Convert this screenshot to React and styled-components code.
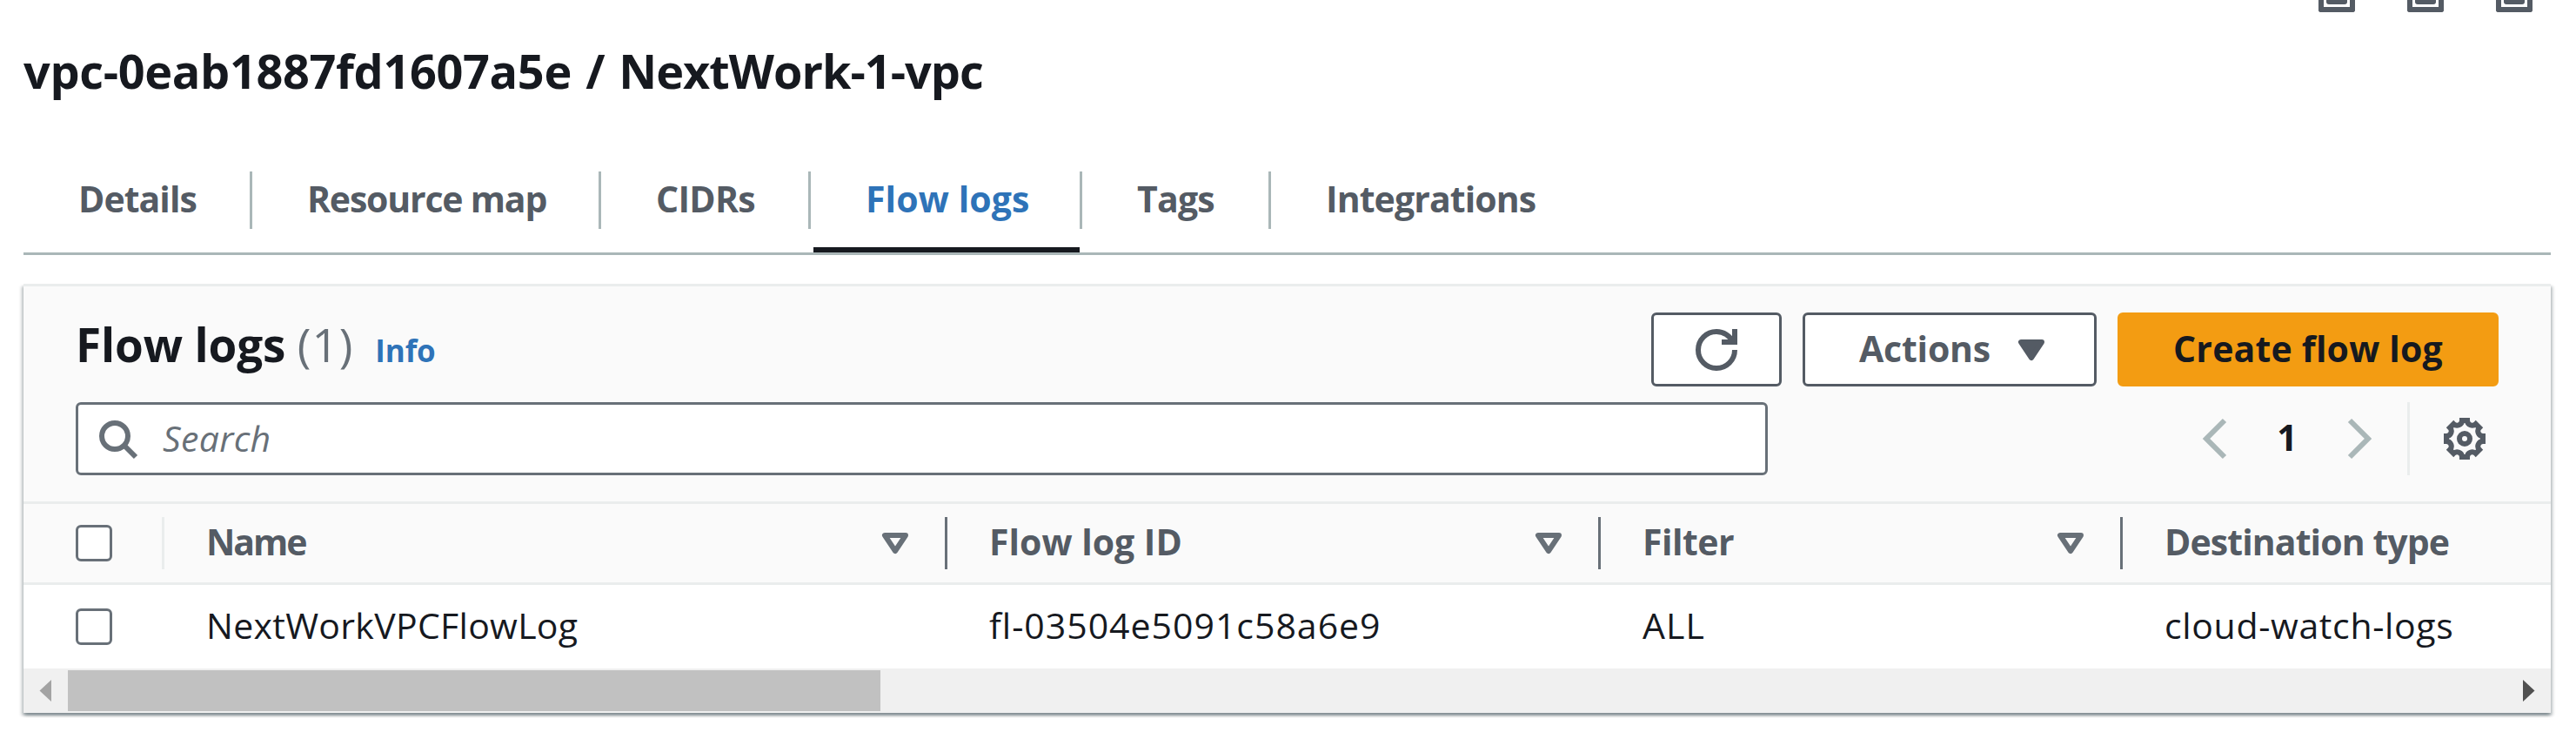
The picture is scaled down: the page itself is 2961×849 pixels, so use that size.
import React from 'react';
import styled, { createGlobalStyle } from 'styled-components';

const color = {
  text: '#16191f',
  muted: '#545b64',
  control: '#687078',
  line: '#aab7b8',
  divider: '#eaeded',
  surface: '#fafafa',
  link: '#2e73b8',
  primary: '#f39c12',
};

const GlobalStyle = createGlobalStyle`
  *, *::before, *::after { box-sizing: border-box; }
  body {
    margin: 0;
    background: #fff;
    color: ${color.text};
    font-family: 'Open Sans', 'Noto Sans', sans-serif;
    font-size: 41px;
    overflow: hidden;
  }
`;

const Page = styled.main`
  width: 2961px;
  height: 849px;
  padding: 0 29px 0 27px;
  overflow: hidden;
`;

const PanelPositions = styled.div`
  display: flex;
  justify-content: flex-end;
  gap: 60px;
  height: 14px;
  padding-right: 21px;
`;

const PositionIcon = styled.span`
  display: block;
  width: 42px;
  height: 14px;
  padding: 0 3px 3px;
  border: 6px solid ${color.muted};
  border-top: 0;
  border-radius: 0 0 3px 3px;

  &::before {
    content: '';
    display: block;
    height: 5px;
    background: ${color.muted};
    border-radius: 0 0 3px 3px;
  }
`;

const Title = styled.h1`
  margin: 32px 0 81px;
  font-size: 54px;
  line-height: 70px;
  font-weight: 700;
  letter-spacing: -0.34px;
  word-spacing: 2.5px;
  white-space: nowrap;
`;

const ResourceName = styled.span`
  letter-spacing: -1px;
`;

const TabBar = styled.nav`
  display: flex;
  height: 96px;
  border-bottom: 3px solid ${color.line};
`;

const Tab = styled.a`
  display: flex;
  flex-direction: column;
  justify-content: space-between;
  width: ${(p) => p.$width}px;
  color: ${(p) => (p.$active ? color.link : color.muted)};
  font-weight: 700;
  white-space: nowrap;

  &::after {
    content: '';
    height: 6px;
    margin: 0 3px;
    background: ${(p) => (p.$active ? color.text : 'transparent')};
  }
`;

const TabLabel = styled.span`
  height: 66px;
  padding-left: 63px;
  border-right: 3px solid ${(p) => (p.$last ? 'transparent' : color.line)};
  line-height: 63px;
  letter-spacing: ${(p) => p.$tracking}px;
`;

const Panel = styled.section`
  display: flex;
  flex-direction: column;
  height: 493px;
  margin-top: 33px;
  border-top: 3px solid ${color.divider};
  background: #fff;
  box-shadow:
    0 3px 3px 0 rgba(0, 28, 36, 0.3),
    3px 3px 3px 0 rgba(0, 28, 36, 0.15),
    -3px 3px 3px 0 rgba(0, 28, 36, 0.15);
`;

const PanelHeader = styled.header`
  display: flex;
  flex-direction: column;
  gap: 18px;
  height: 250px;
  padding: 30px 60px;
  border-bottom: 3px solid ${color.divider};
  background: ${color.surface};
`;

const HeaderLine = styled.div`
  display: flex;
  justify-content: space-between;
`;

const PanelTitle = styled.h2`
  margin: 0;
  font-size: 53px;
  line-height: 74px;
  font-weight: 700;
  letter-spacing: -0.15px;
  white-space: nowrap;
`;

const Count = styled.span`
  color: ${color.control};
  font-weight: 400;
  letter-spacing: 1px;
`;

const InfoLink = styled.a`
  margin-left: 25px;
  color: ${color.link};
  font-size: 35px;
`;

const Actions = styled.div`
  display: flex;
  gap: 24px;
`;

const Button = styled.button`
  display: flex;
  align-items: center;
  justify-content: center;
  gap: 23px;
  width: ${(p) => p.$width}px;
  height: 85px;
  padding: 0;
  border: 3px solid ${(p) => (p.$primary ? color.primary : color.muted)};
  border-radius: 6px;
  background: ${(p) => (p.$primary ? color.primary : '#fff')};
  color: ${(p) => (p.$primary ? color.text : color.muted)};
  font: inherit;
  font-weight: 700;
  white-space: nowrap;
`;

const MenuButton = styled(Button)`
  justify-content: flex-end;
  padding-right: 48px;
`;

const ButtonLabel = styled.span`
  padding-bottom: 4px;
  letter-spacing: ${(p) => p.$tracking}px;
`;

const Icon = styled.svg`
  display: block;
  flex: none;
  width: 48px;
  height: 48px;
  overflow: visible;
  fill: ${(p) => (p.$filled ? 'currentColor' : 'none')};
  stroke: currentColor;
  stroke-width: 2;
`;

const SearchField = styled.label`
  display: flex;
  align-items: center;
  gap: 28px;
  width: 1945px;
  height: 84px;
  padding-left: 21px;
  border: 3px solid ${color.control};
  border-radius: 6px;
  background: #fff;
  color: ${color.control};
`;

const Placeholder = styled.span`
  padding-bottom: 2px;
  font-style: italic;
  letter-spacing: 0.3px;
`;

const Pager = styled.div`
  display: flex;
  align-items: center;
  padding-right: 15px;
  color: ${color.line};
`;

const PageNumber = styled.span`
  width: 117px;
  padding: 0 3px 4px 0;
  color: ${color.text};
  font-weight: 700;
  text-align: center;
`;

const PagerDivider = styled.span`
  width: 3px;
  height: 84px;
  margin: 0 39px 0 30px;
  background: ${color.divider};
`;

const Settings = styled.span`
  color: ${color.muted};
`;

const Row = styled.div`
  display: grid;
  grid-template-columns: 162px 900px 751px 600px 1fr;
  align-items: center;
  height: ${(p) => (p.$head ? 93 : 96)}px;
  border-bottom: ${(p) => (p.$head ? `3px solid ${color.divider}` : '0')};
  background: ${(p) => (p.$head ? color.surface : '#fff')};
  color: ${(p) => (p.$head ? color.muted : color.text)};
  font-weight: ${(p) => (p.$head ? 700 : 400)};
  white-space: nowrap;
`;

const Cell = styled.div`
  display: flex;
  align-items: center;
  padding-left: 48px;
`;

const CheckCell = styled(Cell)`
  justify-content: space-between;
  padding-left: 60px;
`;

const CellText = styled.span`
  flex: 1;
  padding-bottom: 4px;
  letter-spacing: ${(p) => p.$tracking}px;
`;

const Checkbox = styled.span`
  width: 42px;
  height: 42px;
  border: 3px solid ${color.control};
  border-radius: 6px;
  background: #fff;
`;

const ColumnDivider = styled.span`
  width: 3px;
  height: 60px;
  margin-left: ${(p) => (p.$soft ? 0 : 33)}px;
  background: ${(p) => (p.$soft ? color.divider : color.control)};
`;

const SortIcon = styled.span`
  color: ${color.control};
`;

const Scrollbar = styled.div`
  display: flex;
  align-items: center;
  justify-content: space-between;
  height: 51px;
  background: #f0f0f0;
`;

const Track = styled.div`
  flex: 1;
  height: 47px;
`;

const Thumb = styled.div`
  width: 934px;
  height: 47px;
  background: #c1c1c1;
`;

const ScrollArrow = styled.svg`
  display: block;
  width: 51px;
  height: 51px;
  fill: ${(p) => (p.$disabled ? '#a3a3a3' : '#505050')};
`;

// Eight teeth, each a flat edge joined to the next by a concave notch.
const gearPath = (() => {
  const point = (x, y, turn) => {
    const a = (turn * Math.PI) / 4;
    const px = 8 + x * Math.cos(a) - y * Math.sin(a);
    const py = 8 + x * Math.sin(a) + y * Math.cos(a);
    return `${px.toFixed(3)} ${py.toFixed(3)}`;
  };
  let d = `M${point(-1, -7, 0)}`;
  for (let i = 0; i < 8; i += 1) {
    d += `L${point(1, -7, i)}A1.9 1.9 0 0 0 ${point(-1, -7, i + 1)}`;
  }
  return `${d}Z`;
})();

const tabs = [
  { label: 'Details', width: 263, tracking: -0.95 },
  { label: 'Resource map', width: 401, tracking: -1.2 },
  { label: 'CIDRs', width: 241, tracking: -0.7 },
  { label: 'Flow logs', width: 312, tracking: 0.1, active: true },
  { label: 'Tags', width: 217, tracking: -0.8 },
  { label: 'Integrations', width: 340, tracking: -0.9 },
];

const columns = [
  { label: 'Name', tracking: -2, value: 'NextWorkVPCFlowLog', valueTracking: 0.3 },
  { label: 'Flow log ID', tracking: 0, value: 'fl-03504e5091c58a6e9', valueTracking: 1 },
  { label: 'Filter', tracking: -0.5, value: 'ALL', valueTracking: 1.1 },
  { label: 'Destination type', tracking: -0.9, value: 'cloud-watch-logs', valueTracking: 0.65 },
];

export default function App() {
  return (
    <>
      <GlobalStyle />
      <Page>
        <PanelPositions>
          <PositionIcon />
          <PositionIcon />
          <PositionIcon />
        </PanelPositions>
        <Title>
          vpc-0eab1887fd1607a5e / <ResourceName>NextWork-1-vpc</ResourceName>
        </Title>
        <TabBar>
          {tabs.map((tab, i) => (
            <Tab key={tab.label} $width={tab.width} $active={tab.active}>
              <TabLabel $tracking={tab.tracking} $last={i === tabs.length - 1}>
                {tab.label}
              </TabLabel>
            </Tab>
          ))}
        </TabBar>
        <Panel>
          <PanelHeader>
            <HeaderLine>
              <PanelTitle>
                Flow logs <Count>(1)</Count>
                <InfoLink>Info</InfoLink>
              </PanelTitle>
              <Actions>
                <Button $width={150} aria-label="Refresh">
                  <Icon viewBox="0 0 16 16">
                    <path d="M10 5h5V0" />
                    <path d="M15 8a6.957 6.957 0 0 1-7 7 6.957 6.957 0 0 1-7-7 6.957 6.957 0 0 1 7-7 6.87 6.87 0 0 1 6.3 4" />
                  </Icon>
                </Button>
                <MenuButton $width={338}>
                  <ButtonLabel $tracking={-0.2}>Actions</ButtonLabel>
                  <Icon viewBox="0 0 16 16" $filled strokeLinejoin="round">
                    <path d="M4 5h8l-4 6-4-6z" />
                  </Icon>
                </MenuButton>
                <Button $width={438} $primary>
                  <ButtonLabel $tracking={0.2}>Create flow log</ButtonLabel>
                </Button>
              </Actions>
            </HeaderLine>
            <HeaderLine>
              <SearchField>
                <Icon viewBox="0 0 16 16">
                  <circle cx="7" cy="7" r="5" />
                  <path d="m15 15-4.5-4.5" />
                </Icon>
                <Placeholder>Search</Placeholder>
              </SearchField>
              <Pager>
                <Icon viewBox="0 0 16 16">
                  <path d="M11 1 4 8l7 7" />
                </Icon>
                <PageNumber>1</PageNumber>
                <Icon viewBox="0 0 16 16">
                  <path d="m4 1 7 7-7 7" />
                </Icon>
                <PagerDivider />
                <Settings>
                  <Icon viewBox="0 0 16 16">
                    <path d={gearPath} />
                    <circle cx="8" cy="8" r="2" />
                  </Icon>
                </Settings>
              </Pager>
            </HeaderLine>
          </PanelHeader>
          <Row $head>
            <CheckCell>
              <Checkbox />
              <ColumnDivider $soft />
            </CheckCell>
            {columns.map((column, i) => (
              <Cell key={column.label}>
                <CellText $tracking={column.tracking}>{column.label}</CellText>
                {i < columns.length - 1 && (
                  <>
                    <SortIcon>
                      <Icon viewBox="0 0 16 16" strokeLinejoin="round">
                        <path d="M4 5h8l-4 6-4-6z" />
                      </Icon>
                    </SortIcon>
                    <ColumnDivider />
                  </>
                )}
              </Cell>
            ))}
          </Row>
          <Row>
            <CheckCell>
              <Checkbox />
            </CheckCell>
            {columns.map((column) => (
              <Cell key={column.label}>
                <CellText $tracking={column.valueTracking}>{column.value}</CellText>
              </Cell>
            ))}
          </Row>
          <Scrollbar>
            <ScrollArrow viewBox="0 0 51 51" $disabled>
              <path d="M32 13v25L18.500 25.500z" />
            </ScrollArrow>
            <Track>
              <Thumb />
            </Track>
            <ScrollArrow viewBox="0 0 51 51">
              <path d="M19 13v25L32.500 25.500z" />
            </ScrollArrow>
          </Scrollbar>
        </Panel>
      </Page>
    </>
  );
}
